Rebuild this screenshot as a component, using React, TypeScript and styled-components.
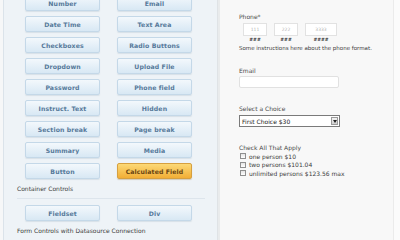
import styled, { createGlobalStyle, css } from "styled-components";

const GlobalStyle = createGlobalStyle`
  html, body {
    margin: 0;
    padding: 0;
    background: #f4f4f4;
  }
  body {
    font-family: "DejaVu Sans", Verdana, sans-serif;
  }
`;

const Screen = styled.div`
  width: 400px;
  height: 240px;
  overflow: hidden;
  display: grid;
  grid-template-columns: 3px 214px 3px 173px 1fr;
  background: #f4f4f4;
`;

const Gutter = styled.div`
  background: #f6f7f8;
`;

const ControlsPanel = styled.div`
  background: #eef3f7;
  border-left: 1px solid #dbe3ea;
  padding: 0 0 0 13px;
  display: flex;
  flex-direction: column;
`;

const Splitter = styled.div`
  background: #e9ebec;
  border-left: 1px solid #dfe3e6;
`;

const ButtonGrid = styled.div<{ $offset?: number }>`
  display: grid;
  grid-template-columns: 75px 75px;
  grid-auto-rows: 16px;
  column-gap: 17px;
  row-gap: 5px;
  margin-left: 8px;
  margin-top: ${(p) => p.$offset ?? 0}px;
`;

const ToolButton = styled.div<{ $active?: boolean }>`
  display: flex;
  align-items: center;
  justify-content: center;
  border-radius: 2px;
  font-size: 6.2px;
  font-weight: bold;
  letter-spacing: 0.1px;
  white-space: nowrap;
  ${(p) =>
    p.$active
      ? css`
          background: linear-gradient(#fcd977, #f2ae35);
          border: 1px solid #d6a040;
          color: #6a4512;
          box-shadow: 0 1px 1px rgba(120, 80, 0, 0.25);
        `
      : css`
          background: linear-gradient(#f3f8fc, #d8e8f4);
          border: 1px solid #c4d8e8;
          color: #56799a;
          box-shadow: 0 1px 1px rgba(90, 120, 150, 0.15);
        `}
`;

const GroupTitle = styled.div<{ $top: number }>`
  margin-top: ${(p) => p.$top}px;
  font-size: 6px;
  color: #3d3d3d;
  line-height: 8px;
`;

const Divider = styled.div`
  margin: 5px 0 6px 0;
  width: 188px;
  height: 1px;
  background: #dde5ec;
`;

const PreviewPanel = styled.div`
  background: #f8f8f8;
  padding: 13px 0 0 19px;
  display: flex;
  flex-direction: column;
  color: #444;
  font-family: "DejaVu Sans", Verdana, sans-serif;
`;

const EdgeStrip = styled.div`
  background: #fbfbfb;
  border-left: 1px solid #ebebeb;
`;

const FieldLabel = styled.div<{ $gap?: number }>`
  font-size: 6px;
  line-height: 8px;
  color: #4a4a4a;
  margin-top: ${(p) => p.$gap ?? 0}px;
`;

const PhoneRow = styled.div`
  display: flex;
  gap: 7px;
  margin: 2px 0 0 4px;
`;

const PhonePart = styled.div`
  display: flex;
  flex-direction: column;
  align-items: center;
`;

const PhoneBox = styled.div<{ $w: number }>`
  width: ${(p) => p.$w}px;
  height: 11px;
  background: #fff;
  border: 1px solid #e2e2e2;
  font-size: 4.5px;
  color: #b4b4b4;
  display: flex;
  align-items: center;
  justify-content: center;
`;

const Mask = styled.div`
  font-size: 4.5px;
  font-weight: bold;
  color: #333;
  margin-top: 1px;
  line-height: 6px;
`;

const Hint = styled.div`
  font-size: 5.5px;
  line-height: 7px;
  color: #3c3c3c;
  margin-top: 2px;
`;

const TextBox = styled.div`
  width: 98px;
  height: 10px;
  margin-top: 1px;
  background: #fff;
  border: 1px solid #e1e1e1;
  border-radius: 2px;
`;

const SelectBox = styled.div`
  width: 97px;
  height: 10px;
  margin-top: 2px;
  background: #fff;
  border: 1px solid #7a7a7a;
  display: flex;
  align-items: center;
  justify-content: space-between;
  padding-left: 2px;
  font-size: 6px;
  color: #222;
`;

const SelectArrow = styled.div`
  width: 7px;
  height: 8px;
  margin-right: 1px;
  background: linear-gradient(#f4f4f4, #cfcfcf);
  border: 1px solid #9a9a9a;
  box-sizing: border-box;
  display: flex;
  align-items: center;
  justify-content: center;
`;

const CheckRow = styled.div`
  display: flex;
  align-items: center;
  gap: 3px;
  height: 8.5px;
  font-size: 6px;
  color: #3c3c3c;
`;

const CheckBox = styled.div`
  width: 6px;
  height: 6px;
  box-sizing: border-box;
  border: 1px solid #8f8f8f;
  background: linear-gradient(#e4e4e4, #ffffff);
  margin-left: 1px;
`;

const tools: { label: string; active?: boolean }[] = [
  { label: "Number" },
  { label: "Email" },
  { label: "Date Time" },
  { label: "Text Area" },
  { label: "Checkboxes" },
  { label: "Radio Buttons" },
  { label: "Dropdown" },
  { label: "Upload File" },
  { label: "Password" },
  { label: "Phone field" },
  { label: "Instruct. Text" },
  { label: "Hidden" },
  { label: "Section break" },
  { label: "Page break" },
  { label: "Summary" },
  { label: "Media" },
  { label: "Button" },
  { label: "Calculated Field", active: true },
];

const choices = ["one person $10", "two persons $101.04", "unlimited persons $123.56 max"];

const App = () => {
  return (
    <>
      <GlobalStyle />
      <Screen>
        <Gutter />
        <ControlsPanel>
          <ButtonGrid $offset={-5}>
            {tools.map((t) => (
              <ToolButton key={t.label} $active={t.active}>
                {t.label}
              </ToolButton>
            ))}
          </ButtonGrid>
          <GroupTitle $top={6}>Container Controls</GroupTitle>
          <Divider />
          <ButtonGrid>
            <ToolButton>Fieldset</ToolButton>
            <ToolButton>Div</ToolButton>
          </ButtonGrid>
          <GroupTitle $top={6}>Form Controls with Datasource Connection</GroupTitle>
        </ControlsPanel>
        <Splitter />
        <PreviewPanel>
          <FieldLabel>Phone*</FieldLabel>
          <PhoneRow>
            <PhonePart>
              <PhoneBox $w={22}>111</PhoneBox>
              <Mask>###</Mask>
            </PhonePart>
            <PhonePart>
              <PhoneBox $w={22}>222</PhoneBox>
              <Mask>###</Mask>
            </PhonePart>
            <PhonePart>
              <PhoneBox $w={30}>3333</PhoneBox>
              <Mask>####</Mask>
            </PhonePart>
          </PhoneRow>
          <Hint>Some instructions here about the phone format.</Hint>
          <FieldLabel $gap={15}>Email</FieldLabel>
          <TextBox />
          <FieldLabel $gap={17}>Select a Choice</FieldLabel>
          <SelectBox>
            First Choice $30
            <SelectArrow>
              <svg width="4" height="3" viewBox="0 0 4 3">
                <path d="M0 0 L4 0 L2 3 Z" fill="#222" />
              </svg>
            </SelectArrow>
          </SelectBox>
          <FieldLabel $gap={17}>Check All That Apply</FieldLabel>
          {choices.map((c) => (
            <CheckRow key={c}>
              <CheckBox />
              {c}
            </CheckRow>
          ))}
        </PreviewPanel>
        <EdgeStrip />
      </Screen>
    </>
  );
};

export default App;
